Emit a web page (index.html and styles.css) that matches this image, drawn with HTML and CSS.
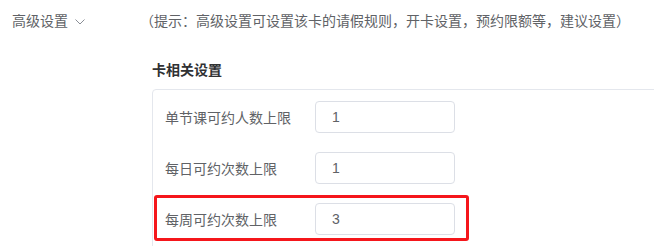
FILE: index.html
```html
<!DOCTYPE html>
<html lang="zh-CN">
<head>
<meta charset="utf-8">
<title>高级设置</title>
<link rel="stylesheet" href="styles.css">
</head>
<body>
<div class="page">
  <div class="adv-head">
    <div class="adv-label">
      <span>高级设置</span>
      <svg class="chev" width="10" height="6" viewBox="0 0 10 6"><path d="M0.5 0.5 L5 5 L9.5 0.5" fill="none" stroke="#8a8e96" stroke-width="1"/></svg>
    </div>
    <div class="adv-hint">（提示：高级设置可设置该卡的请假规则，开卡设置，预约限额等，建议设置）</div>
  </div>
  <div class="section">
    <div class="section-title">卡相关设置</div>
    <div class="card">
      <div class="row">
        <label class="row-label">单节课可约人数上限</label>
        <div class="input">1</div>
      </div>
      <div class="row">
        <label class="row-label">每日可约次数上限</label>
        <div class="input">1</div>
      </div>
      <div class="row highlight">
        <label class="row-label">每周可约次数上限</label>
        <div class="input">3</div>
      </div>
    </div>
  </div>
</div>
</body>
</html>
```
FILE: styles.css
```css
html, body {
  margin: 0;
  padding: 0;
  background: #ffffff;
  overflow: hidden;
}
body {
  font-family: "Liberation Sans", "Noto Sans CJK SC", sans-serif;
  font-size: 14px;
  color: #606266;
}
.page {
  width: 654px;
  height: 246px;
  overflow: hidden;
}
.adv-head {
  display: flex;
  height: 42px;
  line-height: 42px;
}
.adv-label {
  width: 128px;
  padding-left: 12px;
  display: flex;
  align-items: center;
}
.chev {
  margin-left: 7px;
  margin-top: 1px;
}
.adv-hint {
  white-space: nowrap;
}
.section {
  margin-left: 152px;
}
.section-title {
  margin-top: 18px;
  line-height: 20px;
  margin-bottom: 9px;
  font-weight: bold;
  color: #303133;
}
.card {
  width: 560px;
  border: 1px solid #e4e7ed;
  border-radius: 4px;
  padding-top: 11px;
  padding-bottom: 20px;
  display: flex;
  flex-direction: column;
  gap: 19px;
}
.row {
  display: flex;
  align-items: center;
  height: 32px;
  padding-left: 12px;
}
.row-label {
  width: 150px;
}
.input {
  box-sizing: border-box;
  width: 140px;
  height: 32px;
  line-height: 30px;
  border: 1px solid #dcdfe6;
  border-radius: 4px;
  padding-left: 16px;
  color: #606266;
}
.highlight {
  position: relative;
}
.highlight::after {
  content: "";
  position: absolute;
  left: 1px;
  top: -8px;
  width: 315px;
  height: 46px;
  box-sizing: border-box;
  border: 3px solid #f5161b;
  border-radius: 3px;
}
```
